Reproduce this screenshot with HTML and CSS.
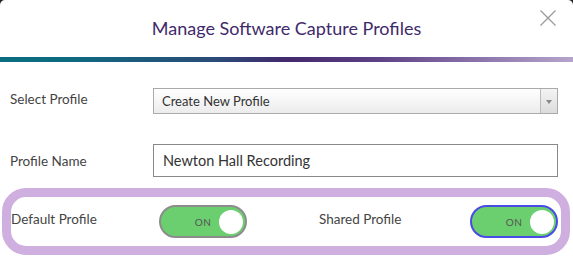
FILE: index.html
```html
<!DOCTYPE html>
<html lang="en">
<head>
  <meta charset="UTF-8">
  <meta name="viewport" content="width=device-width, initial-scale=1.0">
  <title>Manage Software Capture Profiles</title>
  <link rel="stylesheet" href="styles.css">
</head>
<body>

  <!-- Modal -->
  <div class="modal">
    <div class="modal-header">
      <span></span>
      <h1>Manage Software Capture Profiles</h1>
      <button class="close-btn" aria-label="Close">
        <svg width="16" height="16" viewBox="0 0 16 16">
          <path d="M0.5 0.5 L15.5 15.5 M15.5 0.5 L0.5 15.5" stroke="#9a9a9a" stroke-width="1.3" fill="none"/>
        </svg>
      </button>
    </div>
    <div class="header-line"></div>

    <div class="modal-body">
      <div class="form-row">
        <label>Select Profile</label>
        <div class="select-box">
          <span class="select-value">Create New Profile</span>
          <span class="select-arrow"></span>
        </div>
      </div>

      <div class="form-row name-row">
        <label>Profile Name</label>
        <input class="text-input" type="text" value="Newton Hall Recording">
      </div>

      <!-- Toggles -->
      <div class="toggle-group">
        <span class="toggle-label">Default Profile</span>
        <div class="toggle">
          <span class="toggle-text">ON</span>
          <span class="knob"></span>
        </div>
        <span class="toggle-label shared-label">Shared Profile</span>
        <div class="toggle focused">
          <span class="toggle-text">ON</span>
          <span class="knob"></span>
        </div>
      </div>
    </div>
  </div>

</body>
</html>
```

FILE: styles.css
```css
/* Global Styles */
body {
  margin: 0;
  padding: 0;
  background-color: #222;
  font-family: 'Lato', sans-serif;
}

/* Modal */
.modal {
  width: 573px;
  height: 260px;
  background-color: #fff;
  border-radius: 5px 5px 0 0;
  overflow: hidden;
}

.modal-header {
  height: 57px;
  display: grid;
  grid-template-columns: 1fr auto 1fr;
  align-items: center;
}

.modal-header h1 {
  margin: 0;
  font-size: 18px;
  font-weight: 400;
  color: #3f2a6b;
  padding-bottom: 1px;
}

.close-btn {
  justify-self: end;
  align-self: start;
  margin: 10px 17px 0 0;
  padding: 0;
  border: none;
  background: none;
  width: 16px;
  height: 16px;
  cursor: pointer;
}

.close-btn svg {
  display: block;
}

.header-line {
  height: 5px;
  background: linear-gradient(to right, #0b6e80 0%, #0d6a80 12%, #2b4a78 38%, #42286c 50%, #5c3f84 65%, #8f78ae 85%, #b6a4cc 100%);
}

/* Form */
.modal-body {
  padding-top: 26px;
}

.form-row {
  display: grid;
  grid-template-columns: 143px 1fr;
  align-items: center;
  padding: 0 15px 0 10px;
}

.form-row label {
  font-size: 13.5px;
  color: #444;
  padding-bottom: 5px;
}

.name-row {
  margin-top: 30px;
}

.name-row label {
  padding-bottom: 0;
}

.select-box {
  height: 24px;
  border: 1px solid #aaa;
  background: linear-gradient(#fff, #ececec);
  display: flex;
  align-items: stretch;
}

.select-value {
  flex: 1;
  font-size: 13px;
  color: #333;
  line-height: 24px;
  padding-left: 8px;
}

.select-arrow {
  width: 16px;
  border-left: 1px solid #bbb;
  background: linear-gradient(#f4f4f4, #dcdcdc);
  position: relative;
}

.select-arrow::after {
  content: "";
  position: absolute;
  left: 5px;
  top: 11px;
  border-left: 3px solid transparent;
  border-right: 3px solid transparent;
  border-top: 4px solid #888;
}

.text-input {
  height: 31px;
  box-sizing: border-box;
  height: 33px;
  border: 1px solid #888;
  padding: 0 9px;
  font-family: 'Lato', sans-serif;
  font-size: 14.5px;
  color: #333;
  outline: none;
}

/* Toggle group */
.toggle-group {
  margin: 11px 3px 0 2px;
  border: 9px solid #cfaee0;
  border-radius: 24px;
  height: 49px;
  box-sizing: content-box;
  display: grid;
  grid-template-columns: 148px 88px 1fr 88px;
  align-items: center;
  padding-right: 3px;
}

.toggle-label {
  font-size: 13.5px;
  color: #444;
  padding-bottom: 6px;
}

.shared-label {
  padding-left: 72px;
}

.toggle {
  height: 33px;
  box-sizing: border-box;
  border: 2px solid #8c8c8c;
  border-radius: 17px;
  background-color: #6bce6f;
  display: flex;
  align-items: center;
  justify-content: center;
  position: relative;
}

.toggle.focused {
  border-color: #4a4ae6;
}

.toggle-text {
  font-size: 10px;
  color: #555;
  letter-spacing: 0.5px;
}

.knob {
  position: absolute;
  right: 2px;
  top: 2.5px;
  width: 24px;
  height: 24px;
  border-radius: 50%;
  background-color: #fff;
}
```
